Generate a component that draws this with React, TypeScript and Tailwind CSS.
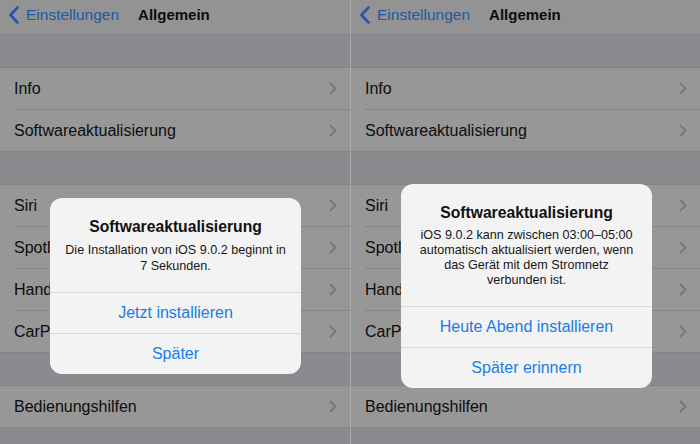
const settingsGroups = [
  ["Info", "Softwareaktualisierung"],
  ["Siri", "Spotlight-Suche", "Handoff & Vorschläge", "CarPlay"],
  ["Bedienungshilfen"],
];

const dialogs = [
  {
    top: "top-[198px]",
    leading: "leading-[16px]",
    lines: ["Die Installation von iOS 9.0.2 beginnt in", "7 Sekunden."],
    actions: ["Jetzt installieren", "Später"],
  },
  {
    top: "top-[184px]",
    leading: "leading-[15px]",
    lines: [
      "iOS 9.0.2 kann zwischen 03:00–05:00",
      "automatisch aktualisiert werden, wenn",
      "das Gerät mit dem Stromnetz",
      "verbunden ist.",
    ],
    actions: ["Heute Abend installieren", "Später erinnern"],
  },
];

function Chevron() {
  return (
    <svg width="8" height="13" viewBox="0 0 8 13" fill="none" className="shrink-0">
      <path d="M1.5 1.5L6.5 6.5L1.5 11.5" stroke="#78787b" strokeWidth="1.8" strokeLinecap="round" strokeLinejoin="round" />
    </svg>
  );
}

function Screen({ dialog, first }: { dialog: (typeof dialogs)[number]; first: boolean }) {
  return (
    <div className={`relative w-[350px] h-[444px] overflow-hidden bg-[#8b8b8f] ${first ? "" : "border-l border-[#a9a9aa]"}`}>
      {/* Nav bar */}
      <div className="h-[35px] bg-[#939394] border-b border-[#808081] flex items-center pl-[8px] pb-[4px]">
        <svg width="12" height="18" viewBox="0 0 12 18" fill="none">
          <path d="M9.5 1.5L2.5 9L9.5 16.5" stroke="#1d59a6" strokeWidth="2.6" strokeLinecap="round" strokeLinejoin="round" />
        </svg>
        <span className="ml-[6px] text-[15.5px] text-[#1d59a6]">Einstellungen</span>
        <span className="ml-[19px] text-[15px] font-bold text-[#0c0c0c]">Allgemein</span>
      </div>

      {settingsGroups.map((rows, gi) => (
        <div key={gi} className="pt-[32px]">
          <div className="bg-[#979797] border-y border-[#848486]">
            {rows.map((label, ri) => (
              <div key={label} className="pl-[14px]">
                <div
                  className={`pr-[13px] flex items-center justify-between ${
                    ri < rows.length - 1 ? "h-[42px] border-b border-[#858587]" : "h-[41px]"
                  }`}
                >
                  <span className="text-[16px] text-[#0d0d0d]">{label}</span>
                  <Chevron />
                </div>
              </div>
            ))}
          </div>
        </div>
      ))}

      {/* Alert */}
      <div className={`absolute ${dialog.top} left-[50px] w-[251px] rounded-[12px] bg-[#f3f3f3] text-center overflow-hidden`}>
        <div className="px-[8px] pt-[19px] pb-[18px]">
          <p className="text-[15.7px] leading-[20px] font-bold text-[#111]">Softwareaktualisierung</p>
          <div className={`mt-[5px] text-[12.6px] ${dialog.leading} text-[#171717] whitespace-nowrap`}>
            {dialog.lines.map((l) => (
              <p key={l}>{l}</p>
            ))}
          </div>
        </div>
        {dialog.actions.map((a) => (
          <div key={a} className="h-[41px] border-t border-[#d9d9db] flex items-center justify-center text-[16px] text-[#1b7ce2]">
            {a}
          </div>
        ))}
      </div>
    </div>
  );
}

export default function App() {
  return (
    <div className="w-[700px] h-[444px] flex overflow-hidden" style={{ fontFamily: '"Liberation Sans", Arial, sans-serif' }}>
      {dialogs.map((d, i) => (
        <Screen key={i} dialog={d} first={i === 0} />
      ))}
    </div>
  );
}
